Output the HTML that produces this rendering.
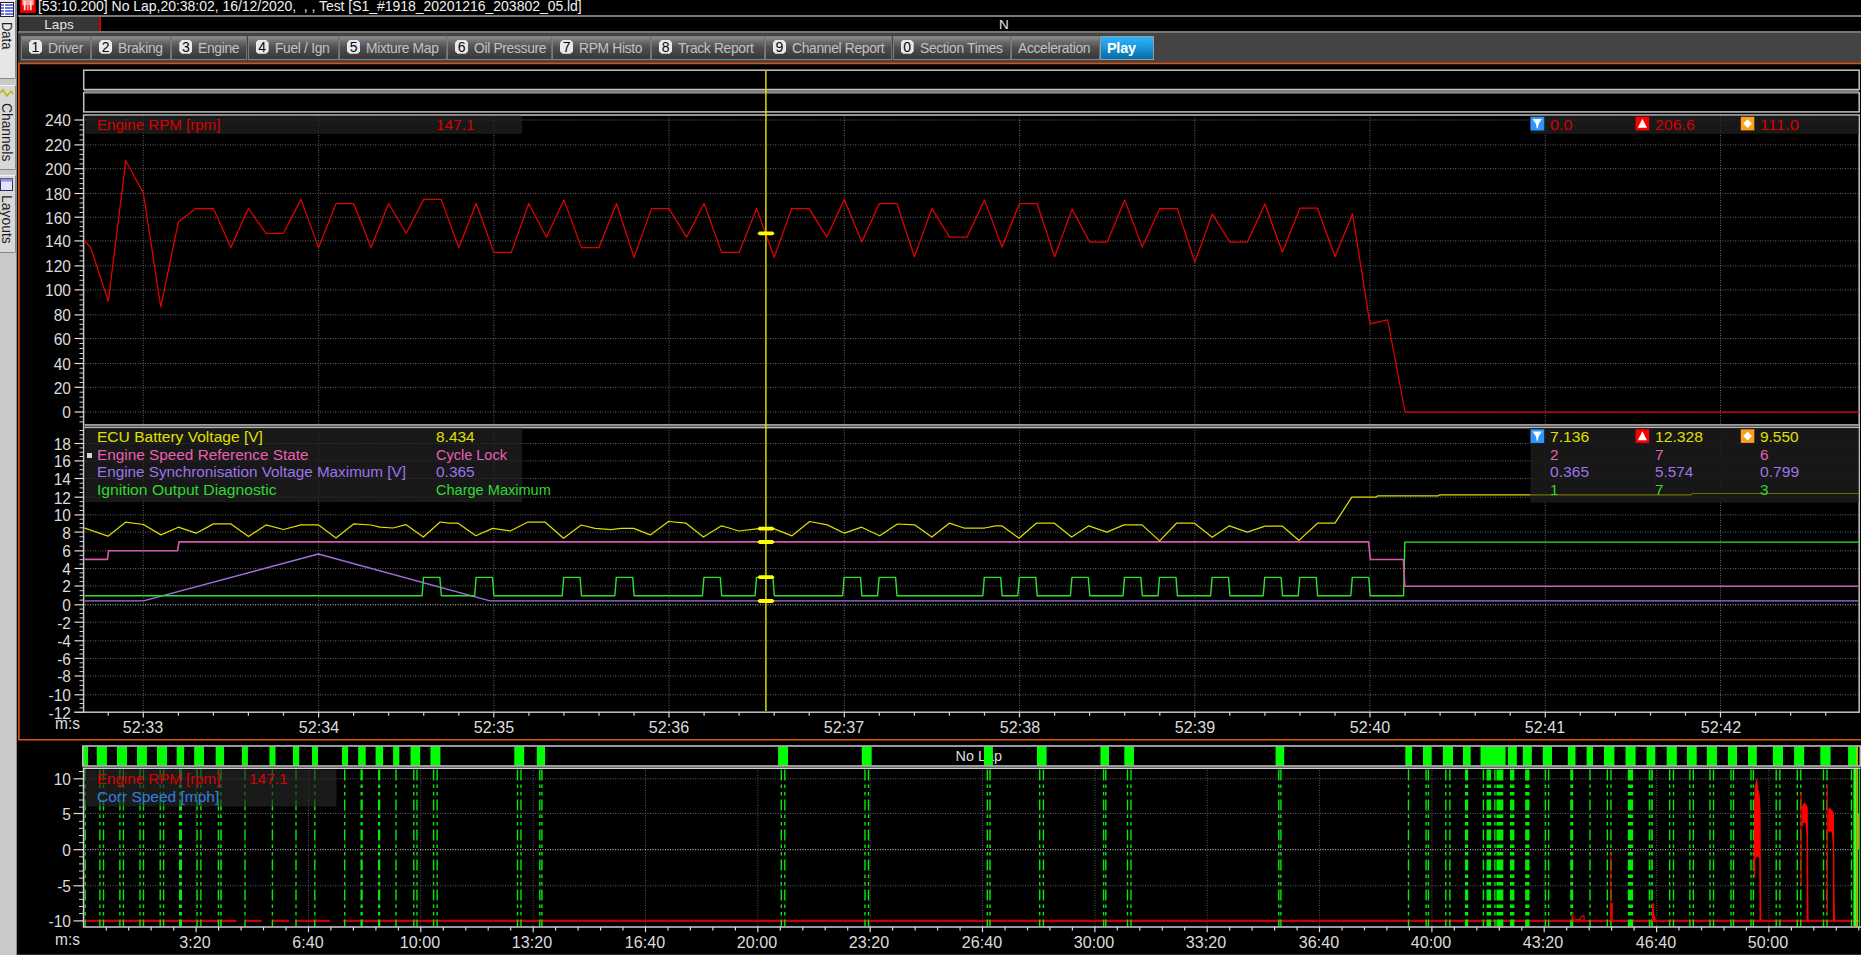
<!DOCTYPE html><html><head><meta charset="utf-8"><title>i2</title><style>
html,body{margin:0;padding:0;background:#000;}
body{width:1861px;height:955px;position:relative;overflow:hidden;font-family:"Liberation Sans", sans-serif;color:#d8d8d8;}
.abs{position:absolute;}
.t{position:absolute;white-space:nowrap;font-size:14px;line-height:17px;}
.ax{position:absolute;white-space:nowrap;font-size:16.5px;line-height:16px;color:#dcdcdc;text-align:right;width:60px;transform:scaleX(0.94);transform-origin:100% 50%;}
.xl{position:absolute;white-space:nowrap;font-size:16.5px;line-height:16px;color:#dcdcdc;text-align:center;width:80px;transform:scaleX(0.975);transform-origin:50% 50%;}
.tab{position:absolute;top:35.5px;height:24.7px;box-sizing:border-box;border:1px solid #7c7c7c;border-right-color:#707070;border-bottom-color:#868686;background:linear-gradient(#8e8e8e 0%,#6a6a6a 22%,#505050 48%,#424242 75%,#3a3a3a 100%);color:#c2c2c2;font-size:14.5px;line-height:21px;white-space:nowrap;letter-spacing:-0.35px;}
.tab b{position:absolute;left:7px;top:3.6px;width:13.2px;height:13.7px;background:#e9e9e9;clip-path:polygon(2.6px 0,10.6px 0,13.2px 2.6px,13.2px 11.1px,10.6px 13.7px,2.6px 13.7px,0 11.1px,0 2.6px);color:#0c0410;font-size:14px;line-height:14px;text-align:center;font-weight:normal;letter-spacing:0;}
.tab span{position:absolute;left:26px;top:1.5px;transform:scaleX(0.955);transform-origin:0 0;}
.vt{position:absolute;left:0;width:17px;transform-origin:0 0;white-space:nowrap;font-size:15px;color:#222;}

</style></head><body>
<div class="abs" style="left:0;top:0;width:17.3px;height:955px;background:#c9c9c9;"></div>
<div class="abs" style="left:16.3px;top:0;width:1px;height:955px;background:#8c8c8c;"></div>
<div class="abs" style="left:0;top:0px;width:15.8px;height:79px;background:#e6e6e6;border-right:1px solid #888;border-bottom:1px solid #888;border-top:1px solid #f4f4f4;box-sizing:border-box;border-radius:0 0 2px 0;"></div>
<div class="abs" style="left:0;top:85px;width:15.8px;height:85px;background:#d8d8d8;border-right:1px solid #888;border-bottom:1px solid #888;border-top:1px solid #f4f4f4;box-sizing:border-box;border-radius:0 0 2px 0;"></div>
<div class="abs" style="left:0;top:175px;width:15.8px;height:78px;background:#d8d8d8;border-right:1px solid #888;border-bottom:1px solid #888;border-top:1px solid #f4f4f4;box-sizing:border-box;border-radius:0 0 2px 0;"></div>
<div class="abs" style="left:13.6px;top:22.0px;transform:rotate(90deg) scaleX(0.94);transform-origin:0 0;font-size:13.8px;line-height:15px;color:#1c1c1c;white-space:nowrap;">Data</div>
<div class="abs" style="left:13.6px;top:103.4px;transform:rotate(90deg) scaleX(1.00);transform-origin:0 0;font-size:13.8px;line-height:15px;color:#1c1c1c;white-space:nowrap;">Channels</div>
<div class="abs" style="left:13.6px;top:194.8px;transform:rotate(90deg) scaleX(1.01);transform-origin:0 0;font-size:13.8px;line-height:15px;color:#1c1c1c;white-space:nowrap;">Layouts</div>
<svg class="abs" style="left:0;top:2.4px" width="15" height="16"><rect x="0.5" y="0.5" width="13" height="14" fill="#fff" stroke="#223"/><g stroke="#2a3cd8" stroke-width="1.4"><line x1="1" y1="3" x2="13" y2="3"/><line x1="1" y1="6" x2="13" y2="6"/><line x1="1" y1="9" x2="13" y2="9"/><line x1="1" y1="12" x2="13" y2="12"/></g><line x1="4.5" y1="1" x2="4.5" y2="14" stroke="#fff" stroke-width="1"/></svg>
<svg class="abs" style="left:0;top:88px" width="15" height="12"><polyline points="0,5 3,2 7,8 11,3 13,6" fill="none" stroke="#c8b400" stroke-width="1.6"/></svg>
<svg class="abs" style="left:0;top:176.5px" width="15" height="16"><rect x="0.5" y="1.5" width="12" height="12" fill="#dfe3ff" stroke="#334"/><rect x="0.5" y="1.5" width="12" height="3" fill="#8890d8"/></svg>
<svg class="abs" style="left:20px;top:0" width="17" height="14"><rect x="0.2" y="0" width="15.6" height="12.9" fill="#ee0000"/><rect x="2.3" y="0" width="11.5" height="5.2" fill="#ff9c9c"/><rect x="3.8" y="0.8" width="1.8" height="9.4" fill="#ffe4dc"/><rect x="9.8" y="0.8" width="1.8" height="9.4" fill="#ffe4dc"/><rect x="6.9" y="5.2" width="1.6" height="5" fill="#f8b0a0"/></svg>
<div class="t" style="left:38px;top:-2px;font-size:14px;color:#f0f0f0;letter-spacing:-0.03px;" id="title">[53:10.200] No Lap,20:38:02, 16/12/2020, &nbsp;, , Test [S1_#1918_20201216_203802_05.ld]</div>
<div class="abs" style="left:18px;top:15px;width:1843px;height:2px;background:#7a7a7a;"></div>
<div class="abs" style="left:19px;top:17px;width:80px;height:15px;background:#363636;"></div>
<div class="t" style="left:19px;top:16px;width:80px;text-align:center;font-size:13.5px;color:#e4e4e4;">Laps</div>
<div class="abs" style="left:99px;top:17px;width:1.5px;height:15px;background:#d00000;"></div>
<div class="t" style="left:999px;top:16px;font-size:13.5px;color:#e8e8e8;">N</div>
<div class="abs" style="left:18px;top:31.2px;width:1843px;height:2px;background:#767676;"></div>
<div class="abs" style="left:18px;top:33.1px;width:1843px;height:29.6px;background:#444444;"></div>
<div class="abs" style="left:18px;top:33.6px;width:2.4px;height:29px;background:#383838;"></div>
<div class="tab" style="left:20.9px;width:70.1px;"><b>1</b><span>Driver</span></div>
<div class="tab" style="left:91.0px;width:80.3px;"><b>2</b><span>Braking</span></div>
<div class="tab" style="left:171.3px;width:76.2px;"><b>3</b><span>Engine</span></div>
<div class="tab" style="left:247.5px;width:91.5px;"><b>4</b><span>Fuel / Ign</span></div>
<div class="tab" style="left:339.0px;width:108.0px;"><b>5</b><span>Mixture Map</span></div>
<div class="tab" style="left:447.0px;width:105.0px;"><b>6</b><span>Oil Pressure</span></div>
<div class="tab" style="left:552.0px;width:99.0px;"><b>7</b><span>RPM Histo</span></div>
<div class="tab" style="left:651.0px;width:113.8px;"><b>8</b><span>Track Report</span></div>
<div class="tab" style="left:764.8px;width:127.7px;"><b>9</b><span>Channel Report</span></div>
<div class="tab" style="left:892.5px;width:118.5px;"><b>0</b><span>Section Times</span></div>
<div class="tab" style="left:1011.0px;width:88.5px;"><span style="left:6px">Acceleration</span></div>
<div class="tab" style="left:1099.5px;width:54px;background:linear-gradient(#2cb4ff 0%,#1f9ce0 40%,#0f7ebc 75%,#0a6ea8 100%);border-color:#9a9a9a;color:#fff;font-weight:bold;letter-spacing:-0.2px;"><span style="left:6.4px;transform:none">Play</span></div>
<svg class="abs" style="left:0;top:0" width="1861" height="955" viewBox="0 0 1861 955">
<defs><clipPath id="c1"><rect x="84.5" y="115" width="1775" height="309"/></clipPath><clipPath id="c2"><rect x="84.5" y="428" width="1775" height="283"/></clipPath><clipPath id="c3"><rect x="84.3" y="769" width="1776" height="157.3"/></clipPath></defs>
<path d="M1861 63.5 H18.9 V739.7 H1861" fill="none" stroke="#e0540e" stroke-width="1.6"/>
<rect x="83.7" y="70.2" width="1775.5" height="19.3" fill="none" stroke="#c4c4c4" stroke-width="1.5"/>
<rect x="83.7" y="92.7" width="1775.5" height="19.2" fill="none" stroke="#c4c4c4" stroke-width="1.5"/>
<rect x="84" y="90" width="1775" height="2.6" fill="#808080"/>
<rect x="84" y="90" width="1775" height="2.6" fill="#808080"/>
<line x1="85" y1="412.0" x2="1859" y2="412.0" stroke="#646464" stroke-width="1" stroke-dasharray="1 1.5" opacity="1"/>
<line x1="85" y1="387.3" x2="1859" y2="387.3" stroke="#646464" stroke-width="1" stroke-dasharray="1 1.5" opacity="1"/>
<line x1="85" y1="363.5" x2="1859" y2="363.5" stroke="#646464" stroke-width="1" stroke-dasharray="1 1.5" opacity="1"/>
<line x1="85" y1="338.5" x2="1859" y2="338.5" stroke="#646464" stroke-width="1" stroke-dasharray="1 1.5" opacity="1"/>
<line x1="85" y1="314.9" x2="1859" y2="314.9" stroke="#646464" stroke-width="1" stroke-dasharray="1 1.5" opacity="1"/>
<line x1="85" y1="289.9" x2="1859" y2="289.9" stroke="#646464" stroke-width="1" stroke-dasharray="1 1.5" opacity="1"/>
<line x1="85" y1="265.9" x2="1859" y2="265.9" stroke="#646464" stroke-width="1" stroke-dasharray="1 1.5" opacity="1"/>
<line x1="85" y1="240.9" x2="1859" y2="240.9" stroke="#646464" stroke-width="1" stroke-dasharray="1 1.5" opacity="1"/>
<line x1="85" y1="217.2" x2="1859" y2="217.2" stroke="#646464" stroke-width="1" stroke-dasharray="1 1.5" opacity="1"/>
<line x1="85" y1="193.5" x2="1859" y2="193.5" stroke="#646464" stroke-width="1" stroke-dasharray="1 1.5" opacity="1"/>
<line x1="85" y1="168.7" x2="1859" y2="168.7" stroke="#646464" stroke-width="1" stroke-dasharray="1 1.5" opacity="1"/>
<line x1="85" y1="144.9" x2="1859" y2="144.9" stroke="#646464" stroke-width="1" stroke-dasharray="1 1.5" opacity="1"/>
<line x1="85" y1="120.0" x2="1859" y2="120.0" stroke="#646464" stroke-width="1" stroke-dasharray="1 1.5" opacity="1"/>
<line x1="143.3" y1="115" x2="143.3" y2="711" stroke="#646464" stroke-width="1" stroke-dasharray="1 1.5"/>
<line x1="318.6" y1="115" x2="318.6" y2="711" stroke="#646464" stroke-width="1" stroke-dasharray="1 1.5"/>
<line x1="493.8" y1="115" x2="493.8" y2="711" stroke="#646464" stroke-width="1" stroke-dasharray="1 1.5"/>
<line x1="669.0" y1="115" x2="669.0" y2="711" stroke="#646464" stroke-width="1" stroke-dasharray="1 1.5"/>
<line x1="844.3" y1="115" x2="844.3" y2="711" stroke="#646464" stroke-width="1" stroke-dasharray="1 1.5"/>
<line x1="1019.5" y1="115" x2="1019.5" y2="711" stroke="#646464" stroke-width="1" stroke-dasharray="1 1.5"/>
<line x1="1194.8" y1="115" x2="1194.8" y2="711" stroke="#646464" stroke-width="1" stroke-dasharray="1 1.5"/>
<line x1="1370.0" y1="115" x2="1370.0" y2="711" stroke="#646464" stroke-width="1" stroke-dasharray="1 1.5"/>
<line x1="1545.3" y1="115" x2="1545.3" y2="711" stroke="#646464" stroke-width="1" stroke-dasharray="1 1.5"/>
<line x1="1720.5" y1="115" x2="1720.5" y2="711" stroke="#646464" stroke-width="1" stroke-dasharray="1 1.5"/>
<line x1="85" y1="694.8" x2="1859" y2="694.8" stroke="#646464" stroke-width="1" stroke-dasharray="1 1.5" opacity="1"/>
<line x1="85" y1="676.0" x2="1859" y2="676.0" stroke="#646464" stroke-width="1" stroke-dasharray="1 1.5" opacity="1"/>
<line x1="85" y1="658.4" x2="1859" y2="658.4" stroke="#646464" stroke-width="1" stroke-dasharray="1 1.5" opacity="1"/>
<line x1="85" y1="640.8" x2="1859" y2="640.8" stroke="#646464" stroke-width="1" stroke-dasharray="1 1.5" opacity="1"/>
<line x1="85" y1="622.2" x2="1859" y2="622.2" stroke="#646464" stroke-width="1" stroke-dasharray="1 1.5" opacity="1"/>
<line x1="85" y1="604.8" x2="1859" y2="604.8" stroke="#cccccc" stroke-width="1" stroke-dasharray="1 1.5" opacity="1"/>
<line x1="85" y1="586.0" x2="1859" y2="586.0" stroke="#646464" stroke-width="1" stroke-dasharray="1 1.5" opacity="1"/>
<line x1="85" y1="568.5" x2="1859" y2="568.5" stroke="#646464" stroke-width="1" stroke-dasharray="1 1.5" opacity="1"/>
<line x1="85" y1="550.9" x2="1859" y2="550.9" stroke="#646464" stroke-width="1" stroke-dasharray="1 1.5" opacity="1"/>
<line x1="85" y1="532.1" x2="1859" y2="532.1" stroke="#646464" stroke-width="1" stroke-dasharray="1 1.5" opacity="1"/>
<line x1="85" y1="514.9" x2="1859" y2="514.9" stroke="#646464" stroke-width="1" stroke-dasharray="1 1.5" opacity="1"/>
<line x1="85" y1="497.2" x2="1859" y2="497.2" stroke="#646464" stroke-width="1" stroke-dasharray="1 1.5" opacity="1"/>
<line x1="85" y1="478.5" x2="1859" y2="478.5" stroke="#646464" stroke-width="1" stroke-dasharray="1 1.5" opacity="1"/>
<line x1="85" y1="460.9" x2="1859" y2="460.9" stroke="#646464" stroke-width="1" stroke-dasharray="1 1.5" opacity="1"/>
<line x1="85" y1="443.5" x2="1859" y2="443.5" stroke="#646464" stroke-width="1" stroke-dasharray="1 1.5" opacity="1"/>
<rect x="83.6" y="115" width="1775.6" height="597.2" fill="none" stroke="#c4c4c4" stroke-width="1.5"/>
<rect x="84.5" y="424.1" width="1774" height="4.2" fill="#585858"/>
<line x1="84.5" y1="424.8" x2="1859" y2="424.8" stroke="#b4b4b4" stroke-width="1.3"/>
<line x1="84.5" y1="427.6" x2="1859" y2="427.6" stroke="#b4b4b4" stroke-width="1.3"/>
<line x1="74.5" y1="412.0" x2="84" y2="412.0" stroke="#e0e0e0" stroke-width="1.2"/>
<line x1="79.5" y1="407.1" x2="84" y2="407.1" stroke="#d0d0d0" stroke-width="1"/>
<line x1="79.5" y1="402.1" x2="84" y2="402.1" stroke="#d0d0d0" stroke-width="1"/>
<line x1="79.5" y1="397.2" x2="84" y2="397.2" stroke="#d0d0d0" stroke-width="1"/>
<line x1="79.5" y1="392.2" x2="84" y2="392.2" stroke="#d0d0d0" stroke-width="1"/>
<line x1="74.5" y1="387.3" x2="84" y2="387.3" stroke="#e0e0e0" stroke-width="1.2"/>
<line x1="79.5" y1="382.5" x2="84" y2="382.5" stroke="#d0d0d0" stroke-width="1"/>
<line x1="79.5" y1="377.8" x2="84" y2="377.8" stroke="#d0d0d0" stroke-width="1"/>
<line x1="79.5" y1="373.0" x2="84" y2="373.0" stroke="#d0d0d0" stroke-width="1"/>
<line x1="79.5" y1="368.3" x2="84" y2="368.3" stroke="#d0d0d0" stroke-width="1"/>
<line x1="74.5" y1="363.5" x2="84" y2="363.5" stroke="#e0e0e0" stroke-width="1.2"/>
<line x1="79.5" y1="358.5" x2="84" y2="358.5" stroke="#d0d0d0" stroke-width="1"/>
<line x1="79.5" y1="353.5" x2="84" y2="353.5" stroke="#d0d0d0" stroke-width="1"/>
<line x1="79.5" y1="348.5" x2="84" y2="348.5" stroke="#d0d0d0" stroke-width="1"/>
<line x1="79.5" y1="343.5" x2="84" y2="343.5" stroke="#d0d0d0" stroke-width="1"/>
<line x1="74.5" y1="338.5" x2="84" y2="338.5" stroke="#e0e0e0" stroke-width="1.2"/>
<line x1="79.5" y1="333.8" x2="84" y2="333.8" stroke="#d0d0d0" stroke-width="1"/>
<line x1="79.5" y1="329.1" x2="84" y2="329.1" stroke="#d0d0d0" stroke-width="1"/>
<line x1="79.5" y1="324.3" x2="84" y2="324.3" stroke="#d0d0d0" stroke-width="1"/>
<line x1="79.5" y1="319.6" x2="84" y2="319.6" stroke="#d0d0d0" stroke-width="1"/>
<line x1="74.5" y1="314.9" x2="84" y2="314.9" stroke="#e0e0e0" stroke-width="1.2"/>
<line x1="79.5" y1="309.9" x2="84" y2="309.9" stroke="#d0d0d0" stroke-width="1"/>
<line x1="79.5" y1="304.9" x2="84" y2="304.9" stroke="#d0d0d0" stroke-width="1"/>
<line x1="79.5" y1="299.9" x2="84" y2="299.9" stroke="#d0d0d0" stroke-width="1"/>
<line x1="79.5" y1="294.9" x2="84" y2="294.9" stroke="#d0d0d0" stroke-width="1"/>
<line x1="74.5" y1="289.9" x2="84" y2="289.9" stroke="#e0e0e0" stroke-width="1.2"/>
<line x1="79.5" y1="285.1" x2="84" y2="285.1" stroke="#d0d0d0" stroke-width="1"/>
<line x1="79.5" y1="280.3" x2="84" y2="280.3" stroke="#d0d0d0" stroke-width="1"/>
<line x1="79.5" y1="275.5" x2="84" y2="275.5" stroke="#d0d0d0" stroke-width="1"/>
<line x1="79.5" y1="270.7" x2="84" y2="270.7" stroke="#d0d0d0" stroke-width="1"/>
<line x1="74.5" y1="265.9" x2="84" y2="265.9" stroke="#e0e0e0" stroke-width="1.2"/>
<line x1="79.5" y1="260.9" x2="84" y2="260.9" stroke="#d0d0d0" stroke-width="1"/>
<line x1="79.5" y1="255.9" x2="84" y2="255.9" stroke="#d0d0d0" stroke-width="1"/>
<line x1="79.5" y1="250.9" x2="84" y2="250.9" stroke="#d0d0d0" stroke-width="1"/>
<line x1="79.5" y1="245.9" x2="84" y2="245.9" stroke="#d0d0d0" stroke-width="1"/>
<line x1="74.5" y1="240.9" x2="84" y2="240.9" stroke="#e0e0e0" stroke-width="1.2"/>
<line x1="79.5" y1="236.2" x2="84" y2="236.2" stroke="#d0d0d0" stroke-width="1"/>
<line x1="79.5" y1="231.4" x2="84" y2="231.4" stroke="#d0d0d0" stroke-width="1"/>
<line x1="79.5" y1="226.7" x2="84" y2="226.7" stroke="#d0d0d0" stroke-width="1"/>
<line x1="79.5" y1="221.9" x2="84" y2="221.9" stroke="#d0d0d0" stroke-width="1"/>
<line x1="74.5" y1="217.2" x2="84" y2="217.2" stroke="#e0e0e0" stroke-width="1.2"/>
<line x1="79.5" y1="212.5" x2="84" y2="212.5" stroke="#d0d0d0" stroke-width="1"/>
<line x1="79.5" y1="207.7" x2="84" y2="207.7" stroke="#d0d0d0" stroke-width="1"/>
<line x1="79.5" y1="203.0" x2="84" y2="203.0" stroke="#d0d0d0" stroke-width="1"/>
<line x1="79.5" y1="198.2" x2="84" y2="198.2" stroke="#d0d0d0" stroke-width="1"/>
<line x1="74.5" y1="193.5" x2="84" y2="193.5" stroke="#e0e0e0" stroke-width="1.2"/>
<line x1="79.5" y1="188.5" x2="84" y2="188.5" stroke="#d0d0d0" stroke-width="1"/>
<line x1="79.5" y1="183.6" x2="84" y2="183.6" stroke="#d0d0d0" stroke-width="1"/>
<line x1="79.5" y1="178.6" x2="84" y2="178.6" stroke="#d0d0d0" stroke-width="1"/>
<line x1="79.5" y1="173.7" x2="84" y2="173.7" stroke="#d0d0d0" stroke-width="1"/>
<line x1="74.5" y1="168.7" x2="84" y2="168.7" stroke="#e0e0e0" stroke-width="1.2"/>
<line x1="79.5" y1="163.9" x2="84" y2="163.9" stroke="#d0d0d0" stroke-width="1"/>
<line x1="79.5" y1="159.2" x2="84" y2="159.2" stroke="#d0d0d0" stroke-width="1"/>
<line x1="79.5" y1="154.4" x2="84" y2="154.4" stroke="#d0d0d0" stroke-width="1"/>
<line x1="79.5" y1="149.7" x2="84" y2="149.7" stroke="#d0d0d0" stroke-width="1"/>
<line x1="74.5" y1="144.9" x2="84" y2="144.9" stroke="#e0e0e0" stroke-width="1.2"/>
<line x1="79.5" y1="139.9" x2="84" y2="139.9" stroke="#d0d0d0" stroke-width="1"/>
<line x1="79.5" y1="134.9" x2="84" y2="134.9" stroke="#d0d0d0" stroke-width="1"/>
<line x1="79.5" y1="129.9" x2="84" y2="129.9" stroke="#d0d0d0" stroke-width="1"/>
<line x1="79.5" y1="124.9" x2="84" y2="124.9" stroke="#d0d0d0" stroke-width="1"/>
<line x1="74.5" y1="120.0" x2="84" y2="120.0" stroke="#e0e0e0" stroke-width="1.2"/>
<line x1="79.5" y1="416.9" x2="84" y2="416.9" stroke="#d0d0d0" stroke-width="1"/>
<line x1="79.5" y1="421.9" x2="84" y2="421.9" stroke="#d0d0d0" stroke-width="1"/>
<line x1="79.5" y1="707.9" x2="84" y2="707.9" stroke="#d0d0d0" stroke-width="1"/>
<line x1="79.5" y1="703.5" x2="84" y2="703.5" stroke="#d0d0d0" stroke-width="1"/>
<line x1="79.5" y1="699.2" x2="84" y2="699.2" stroke="#d0d0d0" stroke-width="1"/>
<line x1="74.5" y1="694.8" x2="84" y2="694.8" stroke="#e0e0e0" stroke-width="1.2"/>
<line x1="79.5" y1="690.1" x2="84" y2="690.1" stroke="#d0d0d0" stroke-width="1"/>
<line x1="79.5" y1="685.4" x2="84" y2="685.4" stroke="#d0d0d0" stroke-width="1"/>
<line x1="79.5" y1="680.7" x2="84" y2="680.7" stroke="#d0d0d0" stroke-width="1"/>
<line x1="74.5" y1="676.0" x2="84" y2="676.0" stroke="#e0e0e0" stroke-width="1.2"/>
<line x1="79.5" y1="671.6" x2="84" y2="671.6" stroke="#d0d0d0" stroke-width="1"/>
<line x1="79.5" y1="667.2" x2="84" y2="667.2" stroke="#d0d0d0" stroke-width="1"/>
<line x1="79.5" y1="662.8" x2="84" y2="662.8" stroke="#d0d0d0" stroke-width="1"/>
<line x1="74.5" y1="658.4" x2="84" y2="658.4" stroke="#e0e0e0" stroke-width="1.2"/>
<line x1="79.5" y1="654.0" x2="84" y2="654.0" stroke="#d0d0d0" stroke-width="1"/>
<line x1="79.5" y1="649.6" x2="84" y2="649.6" stroke="#d0d0d0" stroke-width="1"/>
<line x1="79.5" y1="645.2" x2="84" y2="645.2" stroke="#d0d0d0" stroke-width="1"/>
<line x1="74.5" y1="640.8" x2="84" y2="640.8" stroke="#e0e0e0" stroke-width="1.2"/>
<line x1="79.5" y1="636.1" x2="84" y2="636.1" stroke="#d0d0d0" stroke-width="1"/>
<line x1="79.5" y1="631.5" x2="84" y2="631.5" stroke="#d0d0d0" stroke-width="1"/>
<line x1="79.5" y1="626.9" x2="84" y2="626.9" stroke="#d0d0d0" stroke-width="1"/>
<line x1="74.5" y1="622.2" x2="84" y2="622.2" stroke="#e0e0e0" stroke-width="1.2"/>
<line x1="79.5" y1="617.9" x2="84" y2="617.9" stroke="#d0d0d0" stroke-width="1"/>
<line x1="79.5" y1="613.5" x2="84" y2="613.5" stroke="#d0d0d0" stroke-width="1"/>
<line x1="79.5" y1="609.1" x2="84" y2="609.1" stroke="#d0d0d0" stroke-width="1"/>
<line x1="74.5" y1="604.8" x2="84" y2="604.8" stroke="#e0e0e0" stroke-width="1.2"/>
<line x1="79.5" y1="600.1" x2="84" y2="600.1" stroke="#d0d0d0" stroke-width="1"/>
<line x1="79.5" y1="595.4" x2="84" y2="595.4" stroke="#d0d0d0" stroke-width="1"/>
<line x1="79.5" y1="590.7" x2="84" y2="590.7" stroke="#d0d0d0" stroke-width="1"/>
<line x1="74.5" y1="586.0" x2="84" y2="586.0" stroke="#e0e0e0" stroke-width="1.2"/>
<line x1="79.5" y1="581.6" x2="84" y2="581.6" stroke="#d0d0d0" stroke-width="1"/>
<line x1="79.5" y1="577.2" x2="84" y2="577.2" stroke="#d0d0d0" stroke-width="1"/>
<line x1="79.5" y1="572.9" x2="84" y2="572.9" stroke="#d0d0d0" stroke-width="1"/>
<line x1="74.5" y1="568.5" x2="84" y2="568.5" stroke="#e0e0e0" stroke-width="1.2"/>
<line x1="79.5" y1="564.1" x2="84" y2="564.1" stroke="#d0d0d0" stroke-width="1"/>
<line x1="79.5" y1="559.7" x2="84" y2="559.7" stroke="#d0d0d0" stroke-width="1"/>
<line x1="79.5" y1="555.3" x2="84" y2="555.3" stroke="#d0d0d0" stroke-width="1"/>
<line x1="74.5" y1="550.9" x2="84" y2="550.9" stroke="#e0e0e0" stroke-width="1.2"/>
<line x1="79.5" y1="546.2" x2="84" y2="546.2" stroke="#d0d0d0" stroke-width="1"/>
<line x1="79.5" y1="541.5" x2="84" y2="541.5" stroke="#d0d0d0" stroke-width="1"/>
<line x1="79.5" y1="536.8" x2="84" y2="536.8" stroke="#d0d0d0" stroke-width="1"/>
<line x1="74.5" y1="532.1" x2="84" y2="532.1" stroke="#e0e0e0" stroke-width="1.2"/>
<line x1="79.5" y1="527.8" x2="84" y2="527.8" stroke="#d0d0d0" stroke-width="1"/>
<line x1="79.5" y1="523.5" x2="84" y2="523.5" stroke="#d0d0d0" stroke-width="1"/>
<line x1="79.5" y1="519.2" x2="84" y2="519.2" stroke="#d0d0d0" stroke-width="1"/>
<line x1="74.5" y1="514.9" x2="84" y2="514.9" stroke="#e0e0e0" stroke-width="1.2"/>
<line x1="79.5" y1="510.5" x2="84" y2="510.5" stroke="#d0d0d0" stroke-width="1"/>
<line x1="79.5" y1="506.0" x2="84" y2="506.0" stroke="#d0d0d0" stroke-width="1"/>
<line x1="79.5" y1="501.6" x2="84" y2="501.6" stroke="#d0d0d0" stroke-width="1"/>
<line x1="74.5" y1="497.2" x2="84" y2="497.2" stroke="#e0e0e0" stroke-width="1.2"/>
<line x1="79.5" y1="492.5" x2="84" y2="492.5" stroke="#d0d0d0" stroke-width="1"/>
<line x1="79.5" y1="487.9" x2="84" y2="487.9" stroke="#d0d0d0" stroke-width="1"/>
<line x1="79.5" y1="483.2" x2="84" y2="483.2" stroke="#d0d0d0" stroke-width="1"/>
<line x1="74.5" y1="478.5" x2="84" y2="478.5" stroke="#e0e0e0" stroke-width="1.2"/>
<line x1="79.5" y1="474.1" x2="84" y2="474.1" stroke="#d0d0d0" stroke-width="1"/>
<line x1="79.5" y1="469.7" x2="84" y2="469.7" stroke="#d0d0d0" stroke-width="1"/>
<line x1="79.5" y1="465.3" x2="84" y2="465.3" stroke="#d0d0d0" stroke-width="1"/>
<line x1="74.5" y1="460.9" x2="84" y2="460.9" stroke="#e0e0e0" stroke-width="1.2"/>
<line x1="79.5" y1="456.5" x2="84" y2="456.5" stroke="#d0d0d0" stroke-width="1"/>
<line x1="79.5" y1="452.2" x2="84" y2="452.2" stroke="#d0d0d0" stroke-width="1"/>
<line x1="79.5" y1="447.9" x2="84" y2="447.9" stroke="#d0d0d0" stroke-width="1"/>
<line x1="74.5" y1="443.5" x2="84" y2="443.5" stroke="#e0e0e0" stroke-width="1.2"/>
<line x1="79.5" y1="439.1" x2="84" y2="439.1" stroke="#d0d0d0" stroke-width="1"/>
<line x1="79.5" y1="434.8" x2="84" y2="434.8" stroke="#d0d0d0" stroke-width="1"/>
<line x1="79.5" y1="430.5" x2="84" y2="430.5" stroke="#d0d0d0" stroke-width="1"/>
<line x1="74.2" y1="712.2" x2="84" y2="712.2" stroke="#e0e0e0" stroke-width="1.4"/>
<line x1="108.2" y1="712.2" x2="108.2" y2="715.7" stroke="#d8d8d8" stroke-width="1.2"/>
<line x1="143.3" y1="712.2" x2="143.3" y2="717.4" stroke="#d8d8d8" stroke-width="1.2"/>
<line x1="178.4" y1="712.2" x2="178.4" y2="715.7" stroke="#d8d8d8" stroke-width="1.2"/>
<line x1="213.4" y1="712.2" x2="213.4" y2="715.7" stroke="#d8d8d8" stroke-width="1.2"/>
<line x1="248.4" y1="712.2" x2="248.4" y2="715.7" stroke="#d8d8d8" stroke-width="1.2"/>
<line x1="283.5" y1="712.2" x2="283.5" y2="715.7" stroke="#d8d8d8" stroke-width="1.2"/>
<line x1="318.6" y1="712.2" x2="318.6" y2="717.4" stroke="#d8d8d8" stroke-width="1.2"/>
<line x1="353.6" y1="712.2" x2="353.6" y2="715.7" stroke="#d8d8d8" stroke-width="1.2"/>
<line x1="388.6" y1="712.2" x2="388.6" y2="715.7" stroke="#d8d8d8" stroke-width="1.2"/>
<line x1="423.7" y1="712.2" x2="423.7" y2="715.7" stroke="#d8d8d8" stroke-width="1.2"/>
<line x1="458.8" y1="712.2" x2="458.8" y2="715.7" stroke="#d8d8d8" stroke-width="1.2"/>
<line x1="493.8" y1="712.2" x2="493.8" y2="717.4" stroke="#d8d8d8" stroke-width="1.2"/>
<line x1="528.9" y1="712.2" x2="528.9" y2="715.7" stroke="#d8d8d8" stroke-width="1.2"/>
<line x1="563.9" y1="712.2" x2="563.9" y2="715.7" stroke="#d8d8d8" stroke-width="1.2"/>
<line x1="599.0" y1="712.2" x2="599.0" y2="715.7" stroke="#d8d8d8" stroke-width="1.2"/>
<line x1="634.0" y1="712.2" x2="634.0" y2="715.7" stroke="#d8d8d8" stroke-width="1.2"/>
<line x1="669.0" y1="712.2" x2="669.0" y2="717.4" stroke="#d8d8d8" stroke-width="1.2"/>
<line x1="704.1" y1="712.2" x2="704.1" y2="715.7" stroke="#d8d8d8" stroke-width="1.2"/>
<line x1="739.1" y1="712.2" x2="739.1" y2="715.7" stroke="#d8d8d8" stroke-width="1.2"/>
<line x1="774.2" y1="712.2" x2="774.2" y2="715.7" stroke="#d8d8d8" stroke-width="1.2"/>
<line x1="809.2" y1="712.2" x2="809.2" y2="715.7" stroke="#d8d8d8" stroke-width="1.2"/>
<line x1="844.3" y1="712.2" x2="844.3" y2="717.4" stroke="#d8d8d8" stroke-width="1.2"/>
<line x1="879.3" y1="712.2" x2="879.3" y2="715.7" stroke="#d8d8d8" stroke-width="1.2"/>
<line x1="914.4" y1="712.2" x2="914.4" y2="715.7" stroke="#d8d8d8" stroke-width="1.2"/>
<line x1="949.4" y1="712.2" x2="949.4" y2="715.7" stroke="#d8d8d8" stroke-width="1.2"/>
<line x1="984.5" y1="712.2" x2="984.5" y2="715.7" stroke="#d8d8d8" stroke-width="1.2"/>
<line x1="1019.5" y1="712.2" x2="1019.5" y2="717.4" stroke="#d8d8d8" stroke-width="1.2"/>
<line x1="1054.6" y1="712.2" x2="1054.6" y2="715.7" stroke="#d8d8d8" stroke-width="1.2"/>
<line x1="1089.6" y1="712.2" x2="1089.6" y2="715.7" stroke="#d8d8d8" stroke-width="1.2"/>
<line x1="1124.7" y1="712.2" x2="1124.7" y2="715.7" stroke="#d8d8d8" stroke-width="1.2"/>
<line x1="1159.8" y1="712.2" x2="1159.8" y2="715.7" stroke="#d8d8d8" stroke-width="1.2"/>
<line x1="1194.8" y1="712.2" x2="1194.8" y2="717.4" stroke="#d8d8d8" stroke-width="1.2"/>
<line x1="1229.8" y1="712.2" x2="1229.8" y2="715.7" stroke="#d8d8d8" stroke-width="1.2"/>
<line x1="1264.9" y1="712.2" x2="1264.9" y2="715.7" stroke="#d8d8d8" stroke-width="1.2"/>
<line x1="1300.0" y1="712.2" x2="1300.0" y2="715.7" stroke="#d8d8d8" stroke-width="1.2"/>
<line x1="1335.0" y1="712.2" x2="1335.0" y2="715.7" stroke="#d8d8d8" stroke-width="1.2"/>
<line x1="1370.0" y1="712.2" x2="1370.0" y2="717.4" stroke="#d8d8d8" stroke-width="1.2"/>
<line x1="1405.1" y1="712.2" x2="1405.1" y2="715.7" stroke="#d8d8d8" stroke-width="1.2"/>
<line x1="1440.1" y1="712.2" x2="1440.1" y2="715.7" stroke="#d8d8d8" stroke-width="1.2"/>
<line x1="1475.2" y1="712.2" x2="1475.2" y2="715.7" stroke="#d8d8d8" stroke-width="1.2"/>
<line x1="1510.2" y1="712.2" x2="1510.2" y2="715.7" stroke="#d8d8d8" stroke-width="1.2"/>
<line x1="1545.3" y1="712.2" x2="1545.3" y2="717.4" stroke="#d8d8d8" stroke-width="1.2"/>
<line x1="1580.3" y1="712.2" x2="1580.3" y2="715.7" stroke="#d8d8d8" stroke-width="1.2"/>
<line x1="1615.4" y1="712.2" x2="1615.4" y2="715.7" stroke="#d8d8d8" stroke-width="1.2"/>
<line x1="1650.5" y1="712.2" x2="1650.5" y2="715.7" stroke="#d8d8d8" stroke-width="1.2"/>
<line x1="1685.5" y1="712.2" x2="1685.5" y2="715.7" stroke="#d8d8d8" stroke-width="1.2"/>
<line x1="1720.5" y1="712.2" x2="1720.5" y2="717.4" stroke="#d8d8d8" stroke-width="1.2"/>
<line x1="1755.6" y1="712.2" x2="1755.6" y2="715.7" stroke="#d8d8d8" stroke-width="1.2"/>
<line x1="1790.6" y1="712.2" x2="1790.6" y2="715.7" stroke="#d8d8d8" stroke-width="1.2"/>
<line x1="1825.7" y1="712.2" x2="1825.7" y2="715.7" stroke="#d8d8d8" stroke-width="1.2"/>
<rect x="85.3" y="115.8" width="437" height="18" fill="#202020" opacity="0.75"/>
<rect x="1530.5" y="115.8" width="328" height="18" fill="#202020" opacity="0.75"/>
<rect x="85.3" y="428.2" width="437" height="74" fill="#202020" opacity="0.75"/>
<g clip-path="url(#c1)"><polyline points="73.3,228.6 90.7,247.6 108.3,301.2 125.8,160.7 143.3,193.0 160.8,307.0 178.4,221.8 195.9,208.6 213.4,208.6 230.9,247.6 248.4,208.6 266.0,233.3 283.5,233.3 301.0,199.4 318.6,247.6 336.1,203.5 353.6,203.5 371.1,247.6 388.6,203.5 406.2,233.3 423.7,199.4 441.2,199.4 458.8,247.6 476.3,203.5 493.8,252.4 511.3,252.4 528.8,203.5 546.4,237.2 563.9,199.9 581.4,247.6 599.0,247.6 616.5,203.5 634.0,257.5 651.5,208.6 669.0,208.6 686.6,237.2 704.1,203.5 721.6,252.4 739.1,252.4 756.7,208.6 774.2,257.5 791.7,208.6 809.2,208.6 826.8,237.2 844.3,199.4 861.8,242.0 879.3,203.5 896.9,203.5 914.4,256.8 931.9,208.6 949.5,237.2 967.0,237.2 984.5,199.9 1002.0,247.1 1019.5,203.5 1037.1,203.5 1054.6,256.8 1072.1,209.1 1089.6,242.0 1107.2,242.0 1124.7,199.9 1142.2,247.1 1159.8,208.6 1177.3,208.6 1194.8,262.1 1212.3,214.1 1229.8,242.0 1247.4,242.0 1264.9,204.0 1282.4,252.2 1299.9,208.2 1317.5,208.2 1335.0,256.8 1352.5,213.9 1370.0,323.8 1387.6,319.8 1405.1,412.0 1861.0,412.0" fill="none" stroke="#e40000" stroke-width="1.25" stroke-linejoin="round" /></g>
<g clip-path="url(#c2)">
<polyline points="84.0,600.9 143.4,600.9 318.3,554.0 490.0,600.9 1861.0,600.9" fill="none" stroke="#a070e0" stroke-width="1.3" stroke-linejoin="round" />
<polyline points="84.0,595.7 422.0,595.7 422.8,586.5 423.5,577.4 439.9,577.4 440.6,586.5 441.3,595.7 474.6,595.7 475.4,586.5 476.1,577.4 492.5,577.4 493.2,586.5 493.9,595.7 562.2,595.7 563.0,586.5 563.7,577.4 580.1,577.4 580.8,586.5 581.5,595.7 614.8,595.7 615.6,586.5 616.3,577.4 632.7,577.4 633.4,586.5 634.1,595.7 702.4,595.7 703.2,586.5 703.9,577.4 720.3,577.4 721.0,586.5 721.7,595.7 755.0,595.7 755.8,586.5 756.5,577.4 772.9,577.4 773.6,586.5 774.3,595.7 842.6,595.7 843.4,586.5 844.1,577.4 860.5,577.4 861.2,586.5 861.9,595.7 877.6,595.7 878.4,586.5 879.1,577.4 895.6,577.4 896.3,586.5 897.0,595.7 982.8,595.7 983.6,586.5 984.3,577.4 1000.7,577.4 1001.4,586.5 1002.1,595.7 1017.8,595.7 1018.6,586.5 1019.3,577.4 1035.8,577.4 1036.5,586.5 1037.2,595.7 1070.4,595.7 1071.2,586.5 1071.9,577.4 1088.3,577.4 1089.0,586.5 1089.8,595.7 1123.0,595.7 1123.8,586.5 1124.5,577.4 1140.9,577.4 1141.6,586.5 1142.3,595.7 1158.0,595.7 1158.8,586.5 1159.5,577.4 1176.0,577.4 1176.7,586.5 1177.4,595.7 1210.6,595.7 1211.4,586.5 1212.1,577.4 1228.5,577.4 1229.2,586.5 1230.0,595.7 1263.2,595.7 1264.0,586.5 1264.7,577.4 1281.1,577.4 1281.8,586.5 1282.5,595.7 1298.2,595.7 1299.0,586.5 1299.7,577.4 1316.2,577.4 1316.9,586.5 1317.6,595.7 1350.8,595.7 1351.6,586.5 1352.3,577.4 1368.8,577.4 1369.5,586.5 1370.2,595.7 1403.6,595.7 1404.8,542.1 1861.0,542.1" fill="none" stroke="#30e030" stroke-width="1.4" stroke-linejoin="round" />
<polyline points="84.0,559.4 107.5,559.4 108.5,550.7 177.6,550.7 179.0,541.9 1368.6,541.9 1370.3,559.5 1403.4,559.5 1404.8,586.3 1861.0,586.3" fill="none" stroke="#d458ac" stroke-width="1.6" stroke-linejoin="round" />
<polyline points="84.0,527.9 108.0,536.2 125.6,522.2 143.4,524.5 161.0,534.9 178.4,527.2 196.0,533.2 213.5,523.9 231.0,523.9 248.5,536.6 266.0,524.9 283.5,529.5 301.0,524.9 318.6,524.9 336.0,537.9 353.6,523.9 371.0,525.0 380.0,527.2 392.9,528.0 405.8,524.6 423.3,537.0 440.2,522.0 448.8,523.2 458.2,523.2 475.8,535.8 492.6,528.4 510.3,531.0 527.9,522.0 545.0,522.0 563.5,538.3 581.2,525.0 595.0,528.4 611.0,529.6 620.7,528.4 633.6,528.4 650.3,534.9 668.5,521.5 686.0,523.2 703.4,537.0 721.5,525.8 727.5,527.5 738.7,531.0 756.7,528.9 774.3,528.9 792.0,535.8 809.7,521.5 827.2,524.9 844.4,533.2 861.6,527.2 879.7,535.8 897.4,524.0 914.9,524.9 931.8,537.0 949.3,523.2 963.9,528.0 984.6,528.0 995.7,525.8 1001.9,525.8 1019.0,538.2 1036.3,523.2 1054.4,523.2 1071.6,537.0 1088.8,525.8 1106.8,532.2 1124.0,524.9 1142.0,524.9 1159.6,540.9 1176.5,523.2 1194.5,523.2 1212.2,537.3 1229.4,525.8 1247.3,532.2 1265.0,526.1 1282.2,526.1 1299.0,540.4 1317.5,523.2 1335.0,523.2 1351.8,497.1 1376.5,497.1 1377.5,495.8 1438.3,495.8 1439.3,494.9 1691.0,494.9 1692.0,493.5 1861.0,493.5" fill="none" stroke="#dcdc00" stroke-width="1.25" stroke-linejoin="round" />
</g>
<rect x="1530.5" y="428.2" width="328" height="74.5" fill="#1a1a1a" opacity="0.9"/>
<path d="M1530.5 494.9 H1691 L1692 493.5 H1858.5" fill="none" stroke="#6e6a00" stroke-width="1.2"/>
<rect x="87" y="453" width="5" height="5" fill="#d4d4d4"/>
<line x1="765.9" y1="71" x2="765.9" y2="711" stroke="#dcdc00" stroke-width="1.5"/>
<path d="M757.3 233.4 l2 -1.9 h13.4 l2 1.9 l-2 1.9 h-13.4 z" fill="#ffff00"/>
<path d="M757.3 528.6 l2 -1.9 h13.4 l2 1.9 l-2 1.9 h-13.4 z" fill="#ffff00"/>
<path d="M757.3 542.0 l2 -1.9 h13.4 l2 1.9 l-2 1.9 h-13.4 z" fill="#ffff00"/>
<path d="M757.3 577.2 l2 -1.9 h13.4 l2 1.9 l-2 1.9 h-13.4 z" fill="#ffff00"/>
<path d="M757.3 601.0 l2 -1.9 h13.4 l2 1.9 l-2 1.9 h-13.4 z" fill="#ffff00"/>
<rect x="1530.5" y="116.8" width="13.7" height="13.7" fill="#2c96fc"/><path d="M1532.6 118.9 h9.4 l-3.4 5 l-0.7 4.3 h-1.2 l-0.7 -4.3 z" fill="#fff"/><rect x="1635.6" y="116.8" width="13.6" height="13.6" fill="#fc0000"/><path d="M1642.4 118.8 l4.6 9 h-9.2 z" fill="#fff"/><rect x="1740.8" y="116.8" width="13.5" height="13.6" fill="#fca01c"/><path d="M1747.6 119.2 l4.4 4.4 l-4.4 4.4 l-4.4 -4.4 z" fill="#fff"/>
<rect x="1530.5" y="429.3" width="13.7" height="13.7" fill="#2c96fc"/><path d="M1532.6 431.4 h9.4 l-3.4 5 l-0.7 4.3 h-1.2 l-0.7 -4.3 z" fill="#fff"/><rect x="1635.6" y="429.3" width="13.6" height="13.6" fill="#fc0000"/><path d="M1642.4 431.3 l4.6 9 h-9.2 z" fill="#fff"/><rect x="1740.8" y="429.3" width="13.5" height="13.6" fill="#fca01c"/><path d="M1747.6 431.7 l4.4 4.4 l-4.4 4.4 l-4.4 -4.4 z" fill="#fff"/>
<text x="955.6" y="761.3" font-family="Liberation Sans, sans-serif" font-size="15" fill="#dedede" textLength="46.4" lengthAdjust="spacingAndGlyphs">No Lap</text>
<rect x="82.4" y="746.5" width="5.6" height="19" fill="#00ff00"/>
<rect x="96.8" y="746.5" width="10.1" height="19" fill="#00ff00"/>
<rect x="117.0" y="746.5" width="10.0" height="19" fill="#00ff00"/>
<rect x="137.0" y="746.5" width="9.9" height="19" fill="#00ff00"/>
<rect x="157.0" y="746.5" width="10.0" height="19" fill="#00ff00"/>
<rect x="176.7" y="746.5" width="7.4" height="19" fill="#00ff00"/>
<rect x="194.2" y="746.5" width="9.8" height="19" fill="#00ff00"/>
<rect x="215.7" y="746.5" width="8.4" height="19" fill="#00ff00"/>
<rect x="241.9" y="746.5" width="6.0" height="19" fill="#00ff00"/>
<rect x="269.4" y="746.5" width="6.1" height="19" fill="#00ff00"/>
<rect x="293.0" y="746.5" width="6.2" height="19" fill="#00ff00"/>
<rect x="312.0" y="746.5" width="6.0" height="19" fill="#00ff00"/>
<rect x="342.0" y="746.5" width="6.0" height="19" fill="#00ff00"/>
<rect x="358.2" y="746.5" width="7.5" height="19" fill="#00ff00"/>
<rect x="375.6" y="746.5" width="7.5" height="19" fill="#00ff00"/>
<rect x="393.1" y="746.5" width="6.2" height="19" fill="#00ff00"/>
<rect x="410.5" y="746.5" width="9.7" height="19" fill="#00ff00"/>
<rect x="430.4" y="746.5" width="10.0" height="19" fill="#00ff00"/>
<rect x="514.3" y="746.5" width="9.9" height="19" fill="#00ff00"/>
<rect x="536.8" y="746.5" width="8.3" height="19" fill="#00ff00"/>
<rect x="778.1" y="746.5" width="9.9" height="19" fill="#00ff00"/>
<rect x="861.8" y="746.5" width="9.9" height="19" fill="#00ff00"/>
<rect x="984.0" y="746.5" width="8.9" height="19" fill="#00ff00"/>
<rect x="1037.0" y="746.5" width="9.6" height="19" fill="#00ff00"/>
<rect x="1100.4" y="746.5" width="8.6" height="19" fill="#00ff00"/>
<rect x="1124.3" y="746.5" width="9.7" height="19" fill="#00ff00"/>
<rect x="1275.6" y="746.5" width="8.6" height="19" fill="#00ff00"/>
<rect x="1405.3" y="746.5" width="6.7" height="19" fill="#00ff00"/>
<rect x="1423.0" y="746.5" width="8.7" height="19" fill="#00ff00"/>
<rect x="1442.9" y="746.5" width="10.1" height="19" fill="#00ff00"/>
<rect x="1463.0" y="746.5" width="7.7" height="19" fill="#00ff00"/>
<rect x="1480.5" y="746.5" width="25.1" height="19" fill="#00ff00"/>
<rect x="1507.9" y="746.5" width="8.9" height="19" fill="#00ff00"/>
<rect x="1522.8" y="746.5" width="9.0" height="19" fill="#00ff00"/>
<rect x="1542.8" y="746.5" width="9.2" height="19" fill="#00ff00"/>
<rect x="1567.8" y="746.5" width="7.7" height="19" fill="#00ff00"/>
<rect x="1586.6" y="746.5" width="6.4" height="19" fill="#00ff00"/>
<rect x="1604.0" y="746.5" width="10.4" height="19" fill="#00ff00"/>
<rect x="1625.5" y="746.5" width="10.1" height="19" fill="#00ff00"/>
<rect x="1646.6" y="746.5" width="8.7" height="19" fill="#00ff00"/>
<rect x="1666.7" y="746.5" width="10.1" height="19" fill="#00ff00"/>
<rect x="1686.9" y="746.5" width="9.8" height="19" fill="#00ff00"/>
<rect x="1706.8" y="746.5" width="10.1" height="19" fill="#00ff00"/>
<rect x="1727.9" y="746.5" width="9.1" height="19" fill="#00ff00"/>
<rect x="1748.0" y="746.5" width="8.8" height="19" fill="#00ff00"/>
<rect x="1772.9" y="746.5" width="10.1" height="19" fill="#00ff00"/>
<rect x="1794.1" y="746.5" width="10.1" height="19" fill="#00ff00"/>
<rect x="1820.3" y="746.5" width="10.3" height="19" fill="#00ff00"/>
<rect x="1848.1" y="746.5" width="8.7" height="19" fill="#00ff00"/>
<rect x="82.8" y="746" width="1777.5" height="20" fill="none" stroke="#bdbdbd" stroke-width="1.6"/>
<line x1="85" y1="778.8" x2="1859" y2="778.8" stroke="#646464" stroke-width="1" stroke-dasharray="1 1.5" opacity="1"/>
<line x1="85" y1="813.5" x2="1859" y2="813.5" stroke="#646464" stroke-width="1" stroke-dasharray="1 1.5" opacity="1"/>
<line x1="85" y1="885.8" x2="1859" y2="885.8" stroke="#646464" stroke-width="1" stroke-dasharray="1 1.5" opacity="1"/>
<line x1="85" y1="849.7" x2="1859" y2="849.7" stroke="#d8d8d8" stroke-width="1" stroke-dasharray="1 1.5" opacity="1"/>
<line x1="196.1" y1="770" x2="196.1" y2="926" stroke="#585858" stroke-width="1" stroke-dasharray="1 1.5"/>
<line x1="308.5" y1="770" x2="308.5" y2="926" stroke="#585858" stroke-width="1" stroke-dasharray="1 1.5"/>
<line x1="420.8" y1="770" x2="420.8" y2="926" stroke="#585858" stroke-width="1" stroke-dasharray="1 1.5"/>
<line x1="533.2" y1="770" x2="533.2" y2="926" stroke="#585858" stroke-width="1" stroke-dasharray="1 1.5"/>
<line x1="645.5" y1="770" x2="645.5" y2="926" stroke="#585858" stroke-width="1" stroke-dasharray="1 1.5"/>
<line x1="757.8" y1="770" x2="757.8" y2="926" stroke="#585858" stroke-width="1" stroke-dasharray="1 1.5"/>
<line x1="870.2" y1="770" x2="870.2" y2="926" stroke="#585858" stroke-width="1" stroke-dasharray="1 1.5"/>
<line x1="982.5" y1="770" x2="982.5" y2="926" stroke="#585858" stroke-width="1" stroke-dasharray="1 1.5"/>
<line x1="1094.9" y1="770" x2="1094.9" y2="926" stroke="#585858" stroke-width="1" stroke-dasharray="1 1.5"/>
<line x1="1207.2" y1="770" x2="1207.2" y2="926" stroke="#585858" stroke-width="1" stroke-dasharray="1 1.5"/>
<line x1="1319.5" y1="770" x2="1319.5" y2="926" stroke="#585858" stroke-width="1" stroke-dasharray="1 1.5"/>
<line x1="1431.9" y1="770" x2="1431.9" y2="926" stroke="#585858" stroke-width="1" stroke-dasharray="1 1.5"/>
<line x1="1544.2" y1="770" x2="1544.2" y2="926" stroke="#585858" stroke-width="1" stroke-dasharray="1 1.5"/>
<line x1="1656.6" y1="770" x2="1656.6" y2="926" stroke="#585858" stroke-width="1" stroke-dasharray="1 1.5"/>
<line x1="1768.9" y1="770" x2="1768.9" y2="926" stroke="#585858" stroke-width="1" stroke-dasharray="1 1.5"/>
<g clip-path="url(#c3)">
<line x1="85.0" y1="920.9" x2="236.6" y2="920.9" stroke="#c80000" stroke-width="2.1"/>
<line x1="245.0" y1="920.9" x2="261.6" y2="920.9" stroke="#c80000" stroke-width="2.1"/>
<line x1="272.6" y1="920.9" x2="289.0" y2="920.9" stroke="#c80000" stroke-width="2.1"/>
<line x1="295.0" y1="920.9" x2="330.0" y2="920.9" stroke="#c80000" stroke-width="2.1"/>
<line x1="343.0" y1="920.9" x2="1861.0" y2="920.9" stroke="#c80000" stroke-width="2.1"/>
<line x1="85.2" y1="769.4" x2="85.2" y2="927" stroke="#00e800" stroke-width="1.4" stroke-dasharray="11 4 3.5 4 3.5 4"/>
<line x1="99.9" y1="769.4" x2="99.9" y2="927" stroke="#00ee00" stroke-width="1.4" stroke-dasharray="11 4 3.5 4 3.5 4"/>
<line x1="103.5" y1="769.4" x2="103.5" y2="927" stroke="#00ee00" stroke-width="1.4" stroke-dasharray="11 4 3.5 4 3.5 4"/>
<line x1="119.9" y1="769.4" x2="119.9" y2="927" stroke="#00ee00" stroke-width="1.4" stroke-dasharray="11 4 3.5 4 3.5 4"/>
<line x1="123.4" y1="769.4" x2="123.4" y2="927" stroke="#00ee00" stroke-width="1.4" stroke-dasharray="11 4 3.5 4 3.5 4"/>
<line x1="140.0" y1="769.4" x2="140.0" y2="927" stroke="#00ee00" stroke-width="1.4" stroke-dasharray="11 4 3.5 4 3.5 4"/>
<line x1="143.5" y1="769.4" x2="143.5" y2="927" stroke="#00ee00" stroke-width="1.4" stroke-dasharray="11 4 3.5 4 3.5 4"/>
<line x1="160.2" y1="769.4" x2="160.2" y2="927" stroke="#00ee00" stroke-width="1.4" stroke-dasharray="11 4 3.5 4 3.5 4"/>
<line x1="163.6" y1="769.4" x2="163.6" y2="927" stroke="#00ee00" stroke-width="1.4" stroke-dasharray="11 4 3.5 4 3.5 4"/>
<line x1="180.5" y1="769.4" x2="180.5" y2="927" stroke="#00ee00" stroke-width="3.0" stroke-dasharray="11 4 3.5 4 3.5 4"/>
<line x1="197.1" y1="769.4" x2="197.1" y2="927" stroke="#00ee00" stroke-width="1.4" stroke-dasharray="11 4 3.5 4 3.5 4"/>
<line x1="200.9" y1="769.4" x2="200.9" y2="927" stroke="#00ee00" stroke-width="1.4" stroke-dasharray="11 4 3.5 4 3.5 4"/>
<line x1="218.4" y1="769.4" x2="218.4" y2="927" stroke="#00ee00" stroke-width="1.4" stroke-dasharray="11 4 3.5 4 3.5 4"/>
<line x1="221.0" y1="769.4" x2="221.0" y2="927" stroke="#00ee00" stroke-width="1.6" stroke-dasharray="11 4 3.5 4 3.5 4"/>
<line x1="245.0" y1="769.4" x2="245.0" y2="927" stroke="#00ee00" stroke-width="1.4" stroke-dasharray="11 4 3.5 4 3.5 4"/>
<line x1="272.4" y1="769.4" x2="272.4" y2="927" stroke="#00ee00" stroke-width="1.4" stroke-dasharray="11 4 3.5 4 3.5 4"/>
<line x1="296.0" y1="769.4" x2="296.0" y2="927" stroke="#00ee00" stroke-width="1.4" stroke-dasharray="11 4 3.5 4 3.5 4"/>
<line x1="314.8" y1="769.4" x2="314.8" y2="927" stroke="#00ee00" stroke-width="1.4" stroke-dasharray="11 4 3.5 4 3.5 4"/>
<line x1="344.7" y1="769.4" x2="344.7" y2="927" stroke="#00ee00" stroke-width="1.4" stroke-dasharray="11 4 3.5 4 3.5 4"/>
<line x1="361.6" y1="769.4" x2="361.6" y2="927" stroke="#00ee00" stroke-width="2.3" stroke-dasharray="11 4 3.5 4 3.5 4"/>
<line x1="379.1" y1="769.4" x2="379.1" y2="927" stroke="#00ee00" stroke-width="2.3" stroke-dasharray="11 4 3.5 4 3.5 4"/>
<line x1="396.0" y1="769.4" x2="396.0" y2="927" stroke="#00ee00" stroke-width="1.4" stroke-dasharray="11 4 3.5 4 3.5 4"/>
<line x1="413.8" y1="769.4" x2="413.8" y2="927" stroke="#00ee00" stroke-width="1.4" stroke-dasharray="11 4 3.5 4 3.5 4"/>
<line x1="417.0" y1="769.4" x2="417.0" y2="927" stroke="#00ee00" stroke-width="1.4" stroke-dasharray="11 4 3.5 4 3.5 4"/>
<line x1="433.6" y1="769.4" x2="433.6" y2="927" stroke="#00ee00" stroke-width="1.4" stroke-dasharray="11 4 3.5 4 3.5 4"/>
<line x1="437.1" y1="769.4" x2="437.1" y2="927" stroke="#00ee00" stroke-width="1.4" stroke-dasharray="11 4 3.5 4 3.5 4"/>
<line x1="517.5" y1="769.4" x2="517.5" y2="927" stroke="#00ee00" stroke-width="1.4" stroke-dasharray="11 4 3.5 4 3.5 4"/>
<line x1="521.0" y1="769.4" x2="521.0" y2="927" stroke="#00ee00" stroke-width="1.4" stroke-dasharray="11 4 3.5 4 3.5 4"/>
<line x1="539.8" y1="769.4" x2="539.8" y2="927" stroke="#00ee00" stroke-width="1.4" stroke-dasharray="11 4 3.5 4 3.5 4"/>
<line x1="541.9" y1="769.4" x2="541.9" y2="927" stroke="#00ee00" stroke-width="1.4" stroke-dasharray="11 4 3.5 4 3.5 4"/>
<line x1="781.3" y1="769.4" x2="781.3" y2="927" stroke="#00ee00" stroke-width="1.4" stroke-dasharray="11 4 3.5 4 3.5 4"/>
<line x1="784.8" y1="769.4" x2="784.8" y2="927" stroke="#00ee00" stroke-width="1.4" stroke-dasharray="11 4 3.5 4 3.5 4"/>
<line x1="865.0" y1="769.4" x2="865.0" y2="927" stroke="#00ee00" stroke-width="1.4" stroke-dasharray="11 4 3.5 4 3.5 4"/>
<line x1="868.5" y1="769.4" x2="868.5" y2="927" stroke="#00ee00" stroke-width="1.4" stroke-dasharray="11 4 3.5 4 3.5 4"/>
<line x1="987.3" y1="769.4" x2="987.3" y2="927" stroke="#00ee00" stroke-width="1.4" stroke-dasharray="11 4 3.5 4 3.5 4"/>
<line x1="990.0" y1="769.4" x2="990.0" y2="927" stroke="#00ee00" stroke-width="1.5" stroke-dasharray="11 4 3.5 4 3.5 4"/>
<line x1="1039.7" y1="769.4" x2="1039.7" y2="927" stroke="#00ee00" stroke-width="1.4" stroke-dasharray="11 4 3.5 4 3.5 4"/>
<line x1="1043.4" y1="769.4" x2="1043.4" y2="927" stroke="#00ee00" stroke-width="1.4" stroke-dasharray="11 4 3.5 4 3.5 4"/>
<line x1="1103.6" y1="769.4" x2="1103.6" y2="927" stroke="#00ee00" stroke-width="1.4" stroke-dasharray="11 4 3.5 4 3.5 4"/>
<line x1="1105.8" y1="769.4" x2="1105.8" y2="927" stroke="#00ee00" stroke-width="1.4" stroke-dasharray="11 4 3.5 4 3.5 4"/>
<line x1="1127.5" y1="769.4" x2="1127.5" y2="927" stroke="#00ee00" stroke-width="1.4" stroke-dasharray="11 4 3.5 4 3.5 4"/>
<line x1="1131.0" y1="769.4" x2="1131.0" y2="927" stroke="#00ee00" stroke-width="1.4" stroke-dasharray="11 4 3.5 4 3.5 4"/>
<line x1="1278.8" y1="769.4" x2="1278.8" y2="927" stroke="#00ee00" stroke-width="1.4" stroke-dasharray="11 4 3.5 4 3.5 4"/>
<line x1="1280.9" y1="769.4" x2="1280.9" y2="927" stroke="#00ee00" stroke-width="1.4" stroke-dasharray="11 4 3.5 4 3.5 4"/>
<line x1="1408.5" y1="769.4" x2="1408.5" y2="927" stroke="#00ee00" stroke-width="1.4" stroke-dasharray="11 4 3.5 4 3.5 4"/>
<line x1="1426.1" y1="769.4" x2="1426.1" y2="927" stroke="#00ee00" stroke-width="1.4" stroke-dasharray="11 4 3.5 4 3.5 4"/>
<line x1="1428.4" y1="769.4" x2="1428.4" y2="927" stroke="#00ee00" stroke-width="1.4" stroke-dasharray="11 4 3.5 4 3.5 4"/>
<line x1="1445.8" y1="769.4" x2="1445.8" y2="927" stroke="#00ee00" stroke-width="1.4" stroke-dasharray="11 4 3.5 4 3.5 4"/>
<line x1="1449.9" y1="769.4" x2="1449.9" y2="927" stroke="#00ee00" stroke-width="1.4" stroke-dasharray="11 4 3.5 4 3.5 4"/>
<line x1="1466.6" y1="769.4" x2="1466.6" y2="927" stroke="#00ee00" stroke-width="3.2" stroke-dasharray="11 4 3.5 4 3.5 4"/>
<line x1="1483.4" y1="769.4" x2="1483.4" y2="927" stroke="#00ee00" stroke-width="1.4" stroke-dasharray="11 4 3.5 4 3.5 4"/>
<line x1="1488.8" y1="769.4" x2="1488.8" y2="927" stroke="#00ee00" stroke-width="4.6" stroke-dasharray="11 4 3.5 4 3.5 4"/>
<line x1="1494.9" y1="769.4" x2="1494.9" y2="927" stroke="#00ee00" stroke-width="1.4" stroke-dasharray="11 4 3.5 4 3.5 4"/>
<line x1="1499.9" y1="769.4" x2="1499.9" y2="927" stroke="#00ee00" stroke-width="6.9" stroke-dasharray="11 4 3.5 4 3.5 4"/>
<line x1="1512.2" y1="769.4" x2="1512.2" y2="927" stroke="#00ee00" stroke-width="4.4" stroke-dasharray="11 4 3.5 4 3.5 4"/>
<line x1="1527.3" y1="769.4" x2="1527.3" y2="927" stroke="#00ee00" stroke-width="4.3" stroke-dasharray="11 4 3.5 4 3.5 4"/>
<line x1="1545.5" y1="769.4" x2="1545.5" y2="927" stroke="#00ee00" stroke-width="1.4" stroke-dasharray="11 4 3.5 4 3.5 4"/>
<line x1="1548.6" y1="769.4" x2="1548.6" y2="927" stroke="#00ee00" stroke-width="1.4" stroke-dasharray="11 4 3.5 4 3.5 4"/>
<line x1="1571.7" y1="769.4" x2="1571.7" y2="927" stroke="#00ee00" stroke-width="3.0" stroke-dasharray="11 4 3.5 4 3.5 4"/>
<line x1="1590.0" y1="769.4" x2="1590.0" y2="927" stroke="#00ee00" stroke-width="1.4" stroke-dasharray="11 4 3.5 4 3.5 4"/>
<line x1="1607.3" y1="769.4" x2="1607.3" y2="927" stroke="#00ee00" stroke-width="1.4" stroke-dasharray="11 4 3.5 4 3.5 4"/>
<line x1="1611.0" y1="769.4" x2="1611.0" y2="927" stroke="#00ee00" stroke-width="1.4" stroke-dasharray="11 4 3.5 4 3.5 4"/>
<line x1="1630.5" y1="769.4" x2="1630.5" y2="927" stroke="#00ee00" stroke-width="5.3" stroke-dasharray="11 4 3.5 4 3.5 4"/>
<line x1="1649.6" y1="769.4" x2="1649.6" y2="927" stroke="#00ee00" stroke-width="1.7" stroke-dasharray="11 4 3.5 4 3.5 4"/>
<line x1="1652.0" y1="769.4" x2="1652.0" y2="927" stroke="#00ee00" stroke-width="1.7" stroke-dasharray="11 4 3.5 4 3.5 4"/>
<line x1="1669.7" y1="769.4" x2="1669.7" y2="927" stroke="#00ee00" stroke-width="1.4" stroke-dasharray="11 4 3.5 4 3.5 4"/>
<line x1="1673.5" y1="769.4" x2="1673.5" y2="927" stroke="#00ee00" stroke-width="1.4" stroke-dasharray="11 4 3.5 4 3.5 4"/>
<line x1="1689.9" y1="769.4" x2="1689.9" y2="927" stroke="#00ee00" stroke-width="1.4" stroke-dasharray="11 4 3.5 4 3.5 4"/>
<line x1="1693.3" y1="769.4" x2="1693.3" y2="927" stroke="#00ee00" stroke-width="1.4" stroke-dasharray="11 4 3.5 4 3.5 4"/>
<line x1="1710.0" y1="769.4" x2="1710.0" y2="927" stroke="#00ee00" stroke-width="1.4" stroke-dasharray="11 4 3.5 4 3.5 4"/>
<line x1="1713.5" y1="769.4" x2="1713.5" y2="927" stroke="#00ee00" stroke-width="1.4" stroke-dasharray="11 4 3.5 4 3.5 4"/>
<line x1="1731.0" y1="769.4" x2="1731.0" y2="927" stroke="#00ee00" stroke-width="1.4" stroke-dasharray="11 4 3.5 4 3.5 4"/>
<line x1="1733.5" y1="769.4" x2="1733.5" y2="927" stroke="#00ee00" stroke-width="1.4" stroke-dasharray="11 4 3.5 4 3.5 4"/>
<line x1="1751.0" y1="769.4" x2="1751.0" y2="927" stroke="#00ee00" stroke-width="1.4" stroke-dasharray="11 4 3.5 4 3.5 4"/>
<line x1="1753.4" y1="769.4" x2="1753.4" y2="927" stroke="#00ee00" stroke-width="1.4" stroke-dasharray="11 4 3.5 4 3.5 4"/>
<line x1="1776.2" y1="769.4" x2="1776.2" y2="927" stroke="#00ee00" stroke-width="1.4" stroke-dasharray="11 4 3.5 4 3.5 4"/>
<line x1="1779.9" y1="769.4" x2="1779.9" y2="927" stroke="#00ee00" stroke-width="1.4" stroke-dasharray="11 4 3.5 4 3.5 4"/>
<line x1="1797.3" y1="769.4" x2="1797.3" y2="927" stroke="#00ee00" stroke-width="1.4" stroke-dasharray="11 4 3.5 4 3.5 4"/>
<line x1="1800.8" y1="769.4" x2="1800.8" y2="927" stroke="#00ee00" stroke-width="1.4" stroke-dasharray="11 4 3.5 4 3.5 4"/>
<line x1="1823.5" y1="769.4" x2="1823.5" y2="927" stroke="#00ee00" stroke-width="1.4" stroke-dasharray="11 4 3.5 4 3.5 4"/>
<line x1="1827.0" y1="769.4" x2="1827.0" y2="927" stroke="#00ee00" stroke-width="1.4" stroke-dasharray="11 4 3.5 4 3.5 4"/>
<line x1="1851.5" y1="769.4" x2="1851.5" y2="927" stroke="#00ee00" stroke-width="1.4" stroke-dasharray="11 4 3.5 4 3.5 4"/>
<path d="M1571.8 920.9 L1572.3 912.7 L1573 919 L1580 919.5 L1581.9 916 L1583.9 915.6 L1584.3 920.9" fill="none" stroke="#e00000" stroke-width="1.2"/>
<path d="M1610.9 852.3 V921" stroke="#e00000" stroke-width="1.1" fill="none"/><rect x="1610.5" y="903" width="2.3" height="18" fill="#e80000"/>
<path d="M1651.8 921 V903.5 h2.4 V914 L1656.4 920.9 z" fill="#e80000"/>
<path d="M1753.2 868 L1753.6 852 L1754.2 800 L1755 786 L1756.2 779.5 L1757 778 L1757.8 784 L1758.6 790 L1759.8 796 L1760.6 812 L1760.8 856 L1761.3 921 L1759.6 921 L1759.2 858 L1757.2 856.5 L1755.4 858.5 L1755.2 877.5 L1754 877.5 L1753.8 868 z" fill="#ff0000"/>
<path d="M1801 792.7 V884.6" stroke="#d80000" stroke-width="1.3"/>
<path d="M1801.8 826 L1802 806 L1803.6 803.4 L1805.2 802.8 L1806.6 805 L1807.8 808 L1808 839.6 L1808.3 892.7 L1808.6 921 L1806.6 921 L1806.7 892.7 L1806.6 839 L1805.8 824 L1804.6 822.6 L1803 823.5 L1802.4 827.5 z" fill="#ff0000"/>
<path d="M1827.3 785 V913" stroke="#d80000" stroke-width="1.3"/>
<path d="M1828 833 L1828.2 808.5 L1830 808 L1831.6 810 L1833 811.5 L1834 814 L1834.2 845.8 L1834.6 894.8 L1835 921 L1833 921 L1833 894.8 L1832.8 845 L1831.8 832.5 L1830.4 831 L1829 832 z" fill="#ff0000"/>
<rect x="1853.4" y="769" width="2.9" height="158" fill="#30ff30"/>
<rect x="1857.9" y="813" width="1.5" height="36" fill="#e08020"/>
<rect x="1856.4" y="769" width="1.4" height="158" fill="#e0e000"/>
<rect x="1858.9" y="769" width="1.4" height="158" fill="#00e000"/>
</g>
<rect x="85" y="769.5" width="251.5" height="37" fill="#282828" opacity="0.66"/>
<rect x="1856.4" y="746.5" width="1.4" height="19" fill="#e0e000"/>
<path d="M83.6 768.2 H1860.4 M83.6 767.4 V927.8 M82.9 927 H1861" fill="none" stroke="#d0d0d0" stroke-width="1.6"/>
<line x1="73.5" y1="920.9" x2="83" y2="920.9" stroke="#e0e0e0" stroke-width="1.2"/>
<line x1="79" y1="913.6" x2="83" y2="913.6" stroke="#d0d0d0" stroke-width="1"/>
<line x1="79" y1="906.5" x2="83" y2="906.5" stroke="#d0d0d0" stroke-width="1"/>
<line x1="79" y1="899.4" x2="83" y2="899.4" stroke="#d0d0d0" stroke-width="1"/>
<line x1="79" y1="892.3" x2="83" y2="892.3" stroke="#d0d0d0" stroke-width="1"/>
<line x1="73.5" y1="885.8" x2="83" y2="885.8" stroke="#e0e0e0" stroke-width="1.2"/>
<line x1="79" y1="878.1" x2="83" y2="878.1" stroke="#d0d0d0" stroke-width="1"/>
<line x1="79" y1="871.0" x2="83" y2="871.0" stroke="#d0d0d0" stroke-width="1"/>
<line x1="79" y1="863.9" x2="83" y2="863.9" stroke="#d0d0d0" stroke-width="1"/>
<line x1="79" y1="856.8" x2="83" y2="856.8" stroke="#d0d0d0" stroke-width="1"/>
<line x1="73.5" y1="849.7" x2="83" y2="849.7" stroke="#e0e0e0" stroke-width="1.2"/>
<line x1="79" y1="842.6" x2="83" y2="842.6" stroke="#d0d0d0" stroke-width="1"/>
<line x1="79" y1="835.5" x2="83" y2="835.5" stroke="#d0d0d0" stroke-width="1"/>
<line x1="79" y1="828.4" x2="83" y2="828.4" stroke="#d0d0d0" stroke-width="1"/>
<line x1="79" y1="821.3" x2="83" y2="821.3" stroke="#d0d0d0" stroke-width="1"/>
<line x1="73.5" y1="813.5" x2="83" y2="813.5" stroke="#e0e0e0" stroke-width="1.2"/>
<line x1="79" y1="807.1" x2="83" y2="807.1" stroke="#d0d0d0" stroke-width="1"/>
<line x1="79" y1="800.0" x2="83" y2="800.0" stroke="#d0d0d0" stroke-width="1"/>
<line x1="79" y1="792.9" x2="83" y2="792.9" stroke="#d0d0d0" stroke-width="1"/>
<line x1="79" y1="785.8" x2="83" y2="785.8" stroke="#d0d0d0" stroke-width="1"/>
<line x1="73.5" y1="778.8" x2="83" y2="778.8" stroke="#e0e0e0" stroke-width="1.2"/>
<line x1="79" y1="771.5" x2="83" y2="771.5" stroke="#d0d0d0" stroke-width="1"/>
<line x1="106.3" y1="927" x2="106.3" y2="930.4" stroke="#d8d8d8" stroke-width="1.2"/>
<line x1="128.7" y1="927" x2="128.7" y2="930.4" stroke="#d8d8d8" stroke-width="1.2"/>
<line x1="151.2" y1="927" x2="151.2" y2="930.4" stroke="#d8d8d8" stroke-width="1.2"/>
<line x1="173.7" y1="927" x2="173.7" y2="930.4" stroke="#d8d8d8" stroke-width="1.2"/>
<line x1="196.1" y1="927" x2="196.1" y2="932.2" stroke="#d8d8d8" stroke-width="1.2"/>
<line x1="218.6" y1="927" x2="218.6" y2="930.4" stroke="#d8d8d8" stroke-width="1.2"/>
<line x1="241.1" y1="927" x2="241.1" y2="930.4" stroke="#d8d8d8" stroke-width="1.2"/>
<line x1="263.5" y1="927" x2="263.5" y2="930.4" stroke="#d8d8d8" stroke-width="1.2"/>
<line x1="286.0" y1="927" x2="286.0" y2="930.4" stroke="#d8d8d8" stroke-width="1.2"/>
<line x1="308.5" y1="927" x2="308.5" y2="932.2" stroke="#d8d8d8" stroke-width="1.2"/>
<line x1="330.9" y1="927" x2="330.9" y2="930.4" stroke="#d8d8d8" stroke-width="1.2"/>
<line x1="353.4" y1="927" x2="353.4" y2="930.4" stroke="#d8d8d8" stroke-width="1.2"/>
<line x1="375.9" y1="927" x2="375.9" y2="930.4" stroke="#d8d8d8" stroke-width="1.2"/>
<line x1="398.4" y1="927" x2="398.4" y2="930.4" stroke="#d8d8d8" stroke-width="1.2"/>
<line x1="420.8" y1="927" x2="420.8" y2="932.2" stroke="#d8d8d8" stroke-width="1.2"/>
<line x1="443.3" y1="927" x2="443.3" y2="930.4" stroke="#d8d8d8" stroke-width="1.2"/>
<line x1="465.8" y1="927" x2="465.8" y2="930.4" stroke="#d8d8d8" stroke-width="1.2"/>
<line x1="488.2" y1="927" x2="488.2" y2="930.4" stroke="#d8d8d8" stroke-width="1.2"/>
<line x1="510.7" y1="927" x2="510.7" y2="930.4" stroke="#d8d8d8" stroke-width="1.2"/>
<line x1="533.2" y1="927" x2="533.2" y2="932.2" stroke="#d8d8d8" stroke-width="1.2"/>
<line x1="555.6" y1="927" x2="555.6" y2="930.4" stroke="#d8d8d8" stroke-width="1.2"/>
<line x1="578.1" y1="927" x2="578.1" y2="930.4" stroke="#d8d8d8" stroke-width="1.2"/>
<line x1="600.6" y1="927" x2="600.6" y2="930.4" stroke="#d8d8d8" stroke-width="1.2"/>
<line x1="623.0" y1="927" x2="623.0" y2="930.4" stroke="#d8d8d8" stroke-width="1.2"/>
<line x1="645.5" y1="927" x2="645.5" y2="932.2" stroke="#d8d8d8" stroke-width="1.2"/>
<line x1="668.0" y1="927" x2="668.0" y2="930.4" stroke="#d8d8d8" stroke-width="1.2"/>
<line x1="690.4" y1="927" x2="690.4" y2="930.4" stroke="#d8d8d8" stroke-width="1.2"/>
<line x1="712.9" y1="927" x2="712.9" y2="930.4" stroke="#d8d8d8" stroke-width="1.2"/>
<line x1="735.4" y1="927" x2="735.4" y2="930.4" stroke="#d8d8d8" stroke-width="1.2"/>
<line x1="757.8" y1="927" x2="757.8" y2="932.2" stroke="#d8d8d8" stroke-width="1.2"/>
<line x1="780.3" y1="927" x2="780.3" y2="930.4" stroke="#d8d8d8" stroke-width="1.2"/>
<line x1="802.8" y1="927" x2="802.8" y2="930.4" stroke="#d8d8d8" stroke-width="1.2"/>
<line x1="825.2" y1="927" x2="825.2" y2="930.4" stroke="#d8d8d8" stroke-width="1.2"/>
<line x1="847.7" y1="927" x2="847.7" y2="930.4" stroke="#d8d8d8" stroke-width="1.2"/>
<line x1="870.2" y1="927" x2="870.2" y2="932.2" stroke="#d8d8d8" stroke-width="1.2"/>
<line x1="892.6" y1="927" x2="892.6" y2="930.4" stroke="#d8d8d8" stroke-width="1.2"/>
<line x1="915.1" y1="927" x2="915.1" y2="930.4" stroke="#d8d8d8" stroke-width="1.2"/>
<line x1="937.6" y1="927" x2="937.6" y2="930.4" stroke="#d8d8d8" stroke-width="1.2"/>
<line x1="960.1" y1="927" x2="960.1" y2="930.4" stroke="#d8d8d8" stroke-width="1.2"/>
<line x1="982.5" y1="927" x2="982.5" y2="932.2" stroke="#d8d8d8" stroke-width="1.2"/>
<line x1="1005.0" y1="927" x2="1005.0" y2="930.4" stroke="#d8d8d8" stroke-width="1.2"/>
<line x1="1027.5" y1="927" x2="1027.5" y2="930.4" stroke="#d8d8d8" stroke-width="1.2"/>
<line x1="1049.9" y1="927" x2="1049.9" y2="930.4" stroke="#d8d8d8" stroke-width="1.2"/>
<line x1="1072.4" y1="927" x2="1072.4" y2="930.4" stroke="#d8d8d8" stroke-width="1.2"/>
<line x1="1094.9" y1="927" x2="1094.9" y2="932.2" stroke="#d8d8d8" stroke-width="1.2"/>
<line x1="1117.3" y1="927" x2="1117.3" y2="930.4" stroke="#d8d8d8" stroke-width="1.2"/>
<line x1="1139.8" y1="927" x2="1139.8" y2="930.4" stroke="#d8d8d8" stroke-width="1.2"/>
<line x1="1162.3" y1="927" x2="1162.3" y2="930.4" stroke="#d8d8d8" stroke-width="1.2"/>
<line x1="1184.7" y1="927" x2="1184.7" y2="930.4" stroke="#d8d8d8" stroke-width="1.2"/>
<line x1="1207.2" y1="927" x2="1207.2" y2="932.2" stroke="#d8d8d8" stroke-width="1.2"/>
<line x1="1229.7" y1="927" x2="1229.7" y2="930.4" stroke="#d8d8d8" stroke-width="1.2"/>
<line x1="1252.1" y1="927" x2="1252.1" y2="930.4" stroke="#d8d8d8" stroke-width="1.2"/>
<line x1="1274.6" y1="927" x2="1274.6" y2="930.4" stroke="#d8d8d8" stroke-width="1.2"/>
<line x1="1297.1" y1="927" x2="1297.1" y2="930.4" stroke="#d8d8d8" stroke-width="1.2"/>
<line x1="1319.5" y1="927" x2="1319.5" y2="932.2" stroke="#d8d8d8" stroke-width="1.2"/>
<line x1="1342.0" y1="927" x2="1342.0" y2="930.4" stroke="#d8d8d8" stroke-width="1.2"/>
<line x1="1364.5" y1="927" x2="1364.5" y2="930.4" stroke="#d8d8d8" stroke-width="1.2"/>
<line x1="1386.9" y1="927" x2="1386.9" y2="930.4" stroke="#d8d8d8" stroke-width="1.2"/>
<line x1="1409.4" y1="927" x2="1409.4" y2="930.4" stroke="#d8d8d8" stroke-width="1.2"/>
<line x1="1431.9" y1="927" x2="1431.9" y2="932.2" stroke="#d8d8d8" stroke-width="1.2"/>
<line x1="1454.3" y1="927" x2="1454.3" y2="930.4" stroke="#d8d8d8" stroke-width="1.2"/>
<line x1="1476.8" y1="927" x2="1476.8" y2="930.4" stroke="#d8d8d8" stroke-width="1.2"/>
<line x1="1499.3" y1="927" x2="1499.3" y2="930.4" stroke="#d8d8d8" stroke-width="1.2"/>
<line x1="1521.8" y1="927" x2="1521.8" y2="930.4" stroke="#d8d8d8" stroke-width="1.2"/>
<line x1="1544.2" y1="927" x2="1544.2" y2="932.2" stroke="#d8d8d8" stroke-width="1.2"/>
<line x1="1566.7" y1="927" x2="1566.7" y2="930.4" stroke="#d8d8d8" stroke-width="1.2"/>
<line x1="1589.2" y1="927" x2="1589.2" y2="930.4" stroke="#d8d8d8" stroke-width="1.2"/>
<line x1="1611.6" y1="927" x2="1611.6" y2="930.4" stroke="#d8d8d8" stroke-width="1.2"/>
<line x1="1634.1" y1="927" x2="1634.1" y2="930.4" stroke="#d8d8d8" stroke-width="1.2"/>
<line x1="1656.6" y1="927" x2="1656.6" y2="932.2" stroke="#d8d8d8" stroke-width="1.2"/>
<line x1="1679.0" y1="927" x2="1679.0" y2="930.4" stroke="#d8d8d8" stroke-width="1.2"/>
<line x1="1701.5" y1="927" x2="1701.5" y2="930.4" stroke="#d8d8d8" stroke-width="1.2"/>
<line x1="1724.0" y1="927" x2="1724.0" y2="930.4" stroke="#d8d8d8" stroke-width="1.2"/>
<line x1="1746.4" y1="927" x2="1746.4" y2="930.4" stroke="#d8d8d8" stroke-width="1.2"/>
<line x1="1768.9" y1="927" x2="1768.9" y2="932.2" stroke="#d8d8d8" stroke-width="1.2"/>
<line x1="1791.4" y1="927" x2="1791.4" y2="930.4" stroke="#d8d8d8" stroke-width="1.2"/>
<line x1="1813.8" y1="927" x2="1813.8" y2="930.4" stroke="#d8d8d8" stroke-width="1.2"/>
<line x1="1836.3" y1="927" x2="1836.3" y2="930.4" stroke="#d8d8d8" stroke-width="1.2"/>
<line x1="1858.8" y1="927" x2="1858.8" y2="930.4" stroke="#d8d8d8" stroke-width="1.2"/>
</svg>
<div class="t" style="left:97.4px;top:116.4px;color:#d80000;font-size:15.5px;transform:scaleX(0.9744);transform-origin:0 0;">Engine RPM [rpm]</div>
<div class="t" style="left:436.0px;top:116.4px;color:#d80000;font-size:15.5px;transform:scaleX(0.9949);transform-origin:0 0;">147.1</div>
<div class="t" style="left:1549.5px;top:116.4px;color:#d80000;font-size:15.5px;transform:scaleX(1.0388);transform-origin:0 0;">0.0</div>
<div class="t" style="left:1654.8px;top:116.4px;color:#d80000;font-size:15.5px;transform:scaleX(1.0284);transform-origin:0 0;">206.6</div>
<div class="t" style="left:1760.0px;top:116.4px;color:#d80000;font-size:15.5px;transform:scaleX(1.0712);transform-origin:0 0;">111.0</div>
<div class="t" style="left:97.4px;top:428.4px;color:#e0e000;font-size:15.5px;transform:scaleX(1.0029);transform-origin:0 0;">ECU Battery Voltage [V]</div>
<div class="t" style="left:436.0px;top:428.4px;color:#e0e000;font-size:15.5px;transform:scaleX(0.9975);transform-origin:0 0;">8.434</div>
<div class="t" style="left:1549.5px;top:428.4px;color:#e0e000;font-size:15.5px;transform:scaleX(1.0104);transform-origin:0 0;">7.136</div>
<div class="t" style="left:1654.8px;top:428.4px;color:#e0e000;font-size:15.5px;transform:scaleX(1.0122);transform-origin:0 0;">12.328</div>
<div class="t" style="left:1760.0px;top:428.4px;color:#e0e000;font-size:15.5px;transform:scaleX(0.9923);transform-origin:0 0;">9.550</div>
<div class="t" style="left:97.4px;top:445.8px;color:#e860b4;font-size:15.5px;transform:scaleX(0.9896);transform-origin:0 0;">Engine Speed Reference State</div>
<div class="t" style="left:436.0px;top:445.8px;color:#e860b4;font-size:15.5px;transform:scaleX(0.9352);transform-origin:0 0;">Cycle Lock</div>
<div class="t" style="left:1549.5px;top:445.8px;color:#e860b4;font-size:15.5px;transform:scaleX(0.9900);transform-origin:0 0;">2</div>
<div class="t" style="left:1654.8px;top:445.8px;color:#e860b4;font-size:15.5px;transform:scaleX(0.9900);transform-origin:0 0;">7</div>
<div class="t" style="left:1760.0px;top:445.8px;color:#e860b4;font-size:15.5px;transform:scaleX(0.9900);transform-origin:0 0;">6</div>
<div class="t" style="left:97.4px;top:463.3px;color:#9c74ec;font-size:15.5px;transform:scaleX(0.9853);transform-origin:0 0;">Engine Synchronisation Voltage Maximum [V]</div>
<div class="t" style="left:436.0px;top:463.3px;color:#9c74ec;font-size:15.5px;transform:scaleX(0.9975);transform-origin:0 0;">0.365</div>
<div class="t" style="left:1549.5px;top:463.3px;color:#9c74ec;font-size:15.5px;transform:scaleX(1.0104);transform-origin:0 0;">0.365</div>
<div class="t" style="left:1654.8px;top:463.3px;color:#9c74ec;font-size:15.5px;transform:scaleX(0.9846);transform-origin:0 0;">5.574</div>
<div class="t" style="left:1760.0px;top:463.3px;color:#9c74ec;font-size:15.5px;transform:scaleX(1.0104);transform-origin:0 0;">0.799</div>
<div class="t" style="left:97.4px;top:480.9px;color:#30d830;font-size:15.5px;transform:scaleX(1.0113);transform-origin:0 0;">Ignition Output Diagnostic</div>
<div class="t" style="left:436.0px;top:480.9px;color:#30d830;font-size:15.5px;transform:scaleX(0.9386);transform-origin:0 0;">Charge Maximum</div>
<div class="t" style="left:1549.5px;top:480.9px;color:#30d830;font-size:15.5px;transform:scaleX(0.9900);transform-origin:0 0;">1</div>
<div class="t" style="left:1654.8px;top:480.9px;color:#30d830;font-size:15.5px;transform:scaleX(0.9900);transform-origin:0 0;">7</div>
<div class="t" style="left:1760.0px;top:480.9px;color:#30d830;font-size:15.5px;transform:scaleX(0.9900);transform-origin:0 0;">3</div>
<div class="t" style="left:97.4px;top:770.4px;color:#dc0000;font-size:15.5px;transform:scaleX(0.9744);transform-origin:0 0;">Engine RPM [rpm]</div>
<div class="t" style="left:249.0px;top:770.4px;color:#dc0000;font-size:15.5px;transform:scaleX(0.9949);transform-origin:0 0;">147.1</div>
<div class="t" style="left:97.0px;top:788.4px;color:#2f80e0;font-size:15.5px;transform:scaleX(0.9988);transform-origin:0 0;">Corr Speed [mph]</div>
<div class="ax" style="left:11.4px;top:404px;">0</div>
<div class="ax" style="left:11.4px;top:380px;">20</div>
<div class="ax" style="left:11.4px;top:356px;">40</div>
<div class="ax" style="left:11.4px;top:331px;">60</div>
<div class="ax" style="left:11.4px;top:307px;">80</div>
<div class="ax" style="left:11.4px;top:282px;">100</div>
<div class="ax" style="left:11.4px;top:258px;">120</div>
<div class="ax" style="left:11.4px;top:233px;">140</div>
<div class="ax" style="left:11.4px;top:210px;">160</div>
<div class="ax" style="left:11.4px;top:186px;">180</div>
<div class="ax" style="left:11.4px;top:161px;">200</div>
<div class="ax" style="left:11.4px;top:137px;">220</div>
<div class="ax" style="left:11.4px;top:112px;">240</div>
<div class="ax" style="left:11.4px;top:705px;">-12</div>
<div class="ax" style="left:11.4px;top:687px;">-10</div>
<div class="ax" style="left:11.4px;top:668px;">-8</div>
<div class="ax" style="left:11.4px;top:651px;">-6</div>
<div class="ax" style="left:11.4px;top:633px;">-4</div>
<div class="ax" style="left:11.4px;top:615px;">-2</div>
<div class="ax" style="left:11.4px;top:597px;">0</div>
<div class="ax" style="left:11.4px;top:578px;">2</div>
<div class="ax" style="left:11.4px;top:561px;">4</div>
<div class="ax" style="left:11.4px;top:543px;">6</div>
<div class="ax" style="left:11.4px;top:525px;">8</div>
<div class="ax" style="left:11.4px;top:507px;">10</div>
<div class="ax" style="left:11.4px;top:490px;">12</div>
<div class="ax" style="left:11.4px;top:471px;">14</div>
<div class="ax" style="left:11.4px;top:453px;">16</div>
<div class="ax" style="left:11.4px;top:436px;">18</div>
<div class="ax" style="left:11.4px;top:771px;">10</div>
<div class="ax" style="left:11.4px;top:806px;">5</div>
<div class="ax" style="left:11.4px;top:842px;">0</div>
<div class="ax" style="left:11.4px;top:878px;">-5</div>
<div class="ax" style="left:11.4px;top:913px;">-10</div>
<div class="ax" style="left:20px;top:715px;">m:s</div>
<div class="ax" style="left:20px;top:930.5px;">m:s</div>
<div class="xl" style="left:103.3px;top:719px;">52:33</div>
<div class="xl" style="left:278.6px;top:719px;">52:34</div>
<div class="xl" style="left:453.8px;top:719px;">52:35</div>
<div class="xl" style="left:629.0px;top:719px;">52:36</div>
<div class="xl" style="left:804.3px;top:719px;">52:37</div>
<div class="xl" style="left:979.5px;top:719px;">52:38</div>
<div class="xl" style="left:1154.8px;top:719px;">52:39</div>
<div class="xl" style="left:1330.0px;top:719px;">52:40</div>
<div class="xl" style="left:1505.3px;top:719px;">52:41</div>
<div class="xl" style="left:1680.5px;top:719px;">52:42</div>
<div class="xl" style="left:155.2px;top:934px;">3:20</div>
<div class="xl" style="left:267.6px;top:934px;">6:40</div>
<div class="xl" style="left:379.9px;top:934px;">10:00</div>
<div class="xl" style="left:492.3px;top:934px;">13:20</div>
<div class="xl" style="left:604.6px;top:934px;">16:40</div>
<div class="xl" style="left:716.9px;top:934px;">20:00</div>
<div class="xl" style="left:829.3px;top:934px;">23:20</div>
<div class="xl" style="left:941.6px;top:934px;">26:40</div>
<div class="xl" style="left:1054.0px;top:934px;">30:00</div>
<div class="xl" style="left:1166.3px;top:934px;">33:20</div>
<div class="xl" style="left:1278.6px;top:934px;">36:40</div>
<div class="xl" style="left:1391.0px;top:934px;">40:00</div>
<div class="xl" style="left:1503.3px;top:934px;">43:20</div>
<div class="xl" style="left:1615.7px;top:934px;">46:40</div>
<div class="xl" style="left:1728.0px;top:934px;">50:00</div>
<div class="abs" style="left:17.3px;top:953.6px;width:1844px;height:1.4px;background:#303030;"></div>
</body></html>
